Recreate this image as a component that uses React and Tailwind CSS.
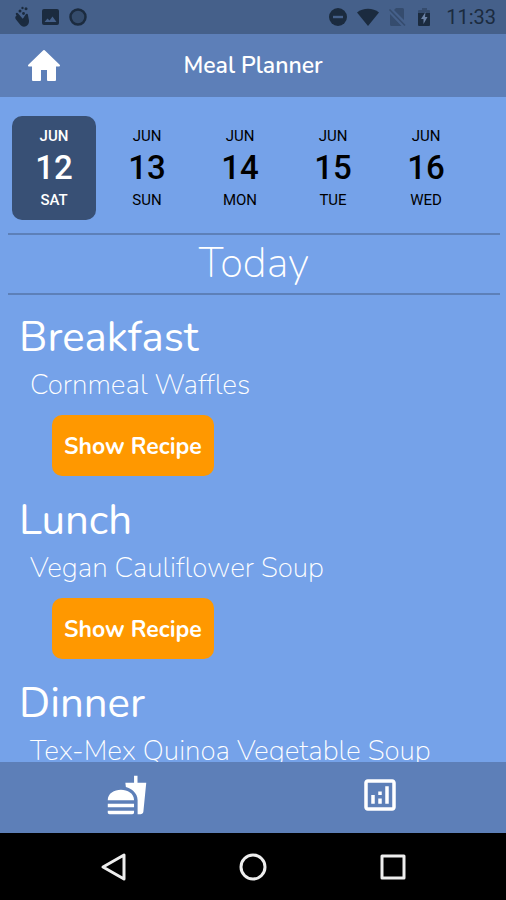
import { useState } from "react";
import { MdFastfood, MdOutlineAnalytics } from "react-icons/md";

const days = [
  { month: "JUN", date: 12, day: "SAT" },
  { month: "JUN", date: 13, day: "SUN" },
  { month: "JUN", date: 14, day: "MON" },
  { month: "JUN", date: 15, day: "TUE" },
  { month: "JUN", date: 16, day: "WED" },
];

const meals = [
  { name: "Breakfast", dish: "Cornmeal Waffles" },
  { name: "Lunch", dish: "Vegan Cauliflower Soup" },
  { name: "Dinner", dish: "Tex-Mex Quinoa Vegetable Soup" },
];

function StatusBar() {
  return (
    <div className="flex h-[34px] shrink-0 items-center justify-between bg-[#45608a] pr-[10px] pl-[14px] text-[#1b2b3f]">
      <div className="flex items-center gap-2">
        {/* Hand */}
        <svg width="18" height="22" viewBox="0 0 18 22" fill="currentColor">
          <path d="M2.500 9.500c.9-.8 1.900-.3 2.600.6L8 13c1-.2 1.500-1 2-2l1.800-2.800c.5-.9 2-.6 2.100.5l1.100 5.800c.3 2.500-1 4.800-3 5.800-2.500 1.200-4.600 0-6.200-2L2 13.500c-1-1.200-1.200-2.800.500-4z" />
          <path d="M3 8l6 7" stroke="currentColor" strokeWidth="2.500" strokeLinecap="round" />
          <circle cx="6" cy="5" r="1.500" />
          <circle cx="9.500" cy="7.500" r="1.400" />
          <circle cx="8.500" cy="2" r="1.200" />
          <circle cx="12" cy="2.800" r="1.500" />
        </svg>
        {/* Picture */}
        <svg width="20" height="20" viewBox="0 0 20 20">
          <rect x="2" y="2" width="17" height="16" rx="2" fill="currentColor" />
          <path d="M4.500 15l3-3.500 2 2 3-4 4 5.500z" fill="#45608a" />
        </svg>
        <svg width="20" height="20" viewBox="0 0 20 20">
          <circle cx="10" cy="10" r="7.500" fill="#344b6b" stroke="currentColor" strokeWidth="2.500" />
        </svg>
      </div>
      <div className="flex items-center gap-2">
        {/* Do not disturb */}
        <svg width="20" height="20" viewBox="0 0 20 20">
          <circle cx="10" cy="10" r="9" fill="currentColor" />
          <path d="M5 10h10" stroke="#45608a" strokeWidth="2.400" />
        </svg>
        <svg width="24" height="20" viewBox="0 0 24 20">
          <path d="M1 5.500C7 .5 17 .5 23 5.500L12 19z" fill="currentColor" />
        </svg>
        {/* No SIM */}
        <svg width="18" height="20" viewBox="0 0 18 20">
          <path d="M8 1h6.500A1.500 1.500 0 0 1 16 2.500V13L6 3zM2 7l11.500 12H3.500A1.500 1.500 0 0 1 2 17.500z" fill="#354c6e" />
          <path d="M1.500 2.500L17 18.500" stroke="#354c6e" strokeWidth="1.600" />
        </svg>
        {/* Battery */}
        <svg width="20" height="20" viewBox="0 0 20 20">
          <path d="M8 1h5v2h2a1 1 0 0 1 1 1v3H4V4a1 1 0 0 1 1-1h3z" fill="#354c6e" />
          <path d="M4 6h12v12a1 1 0 0 1-1 1H5a1 1 0 0 1-1-1z" fill="currentColor" />
          <path d="M11.500 5L7 12h2.500v5l4-7H11z" fill="#6b82a6" />
        </svg>
        <span className="pl-1 font-['Roboto',sans-serif] text-[20px] leading-6">11:33</span>
      </div>
    </div>
  );
}

function Header() {
  return (
    <header className="grid h-[63px] shrink-0 grid-cols-[1fr_auto_1fr] items-center bg-[#5d7fb8] px-6">
      <button type="button" aria-label="Home" className="w-10 justify-self-start text-white">
        <svg width="40" height="36" viewBox="0 0 40 36">
          <path
            d="M20 3L5 17.500h4V32h7V21h8v11h7V17.500h4z"
            fill="currentColor"
            stroke="currentColor"
            strokeWidth="2"
            strokeLinejoin="round"
          />
        </svg>
      </button>
      <h1 className="text-[23px] leading-8 font-semibold text-white">Meal Planner</h1>
    </header>
  );
}

function DayPicker({ selected, onSelect }) {
  return (
    <div className="flex gap-[9px] px-3 pt-[19px] pb-[13px] font-['Roboto',sans-serif]">
      {days.map((item) => (
        <button
          key={item.date}
          type="button"
          aria-pressed={selected === item.date}
          onClick={() => onSelect(item.date)}
          className={`flex h-[104px] w-[84px] flex-col items-center justify-center rounded-[10px] ${
            selected === item.date ? "bg-[#385075] font-medium text-white" : "font-normal text-black"
          }`}
        >
          <span className="text-[15px] leading-6">{item.month}</span>
          <span className="text-[33px] leading-10 font-medium">{item.date}</span>
          <span className="text-[15px] leading-6">{item.day}</span>
        </button>
      ))}
    </div>
  );
}

function Meal({ name, dish }) {
  return (
    <section className="flex h-[183px] shrink-0 flex-col items-start">
      <h3 className="pl-[19px] text-[42px] leading-[58px] font-normal">{name}</h3>
      <p className="pl-[30px] text-[28px] leading-9 font-extralight">{dish}</p>
      <button
        type="button"
        className="mt-3 ml-[52px] h-[61px] rounded-[10px] bg-[#ff9800] px-3 pt-1 text-[23px] font-bold"
      >
        Show Recipe
      </button>
    </section>
  );
}

export default function App() {
  const [selected, setSelected] = useState(12);

  return (
    <div className="flex h-screen flex-col bg-[#75a2e9] font-['Nunito','Lato',sans-serif]">
      <StatusBar />
      <Header />

      <main className="min-h-0 flex-1 overflow-hidden text-white">
        <DayPicker selected={selected} onSelect={setSelected} />
        <h2 className="mr-[6px] ml-2 h-[62px] border-y-2 border-[#5d80b8] text-center text-[42px] leading-[57px] font-extralight">
          Today
        </h2>
        <div className="flex flex-col pt-[14px]">
          {meals.map((meal) => (
            <Meal key={meal.name} name={meal.name} dish={meal.dish} />
          ))}
        </div>
      </main>

      {/* Tabs */}
      <nav className="grid h-[71px] shrink-0 grid-cols-2 bg-[#5d7fb8] text-white">
        <button type="button" aria-label="Meals" className="flex items-center justify-center pb-[6px]">
          <MdFastfood size={42} />
        </button>
        <button type="button" aria-label="Stats" className="flex items-center justify-center pb-[6px]">
          <MdOutlineAnalytics size={42} />
        </button>
      </nav>

      {/* System buttons */}
      <div className="flex h-[67px] shrink-0 items-center justify-center gap-[108px] bg-black text-[#eeeeee]">
        <button type="button" aria-label="Back">
          <svg width="32" height="32" viewBox="0 0 32 32" fill="none" stroke="currentColor" strokeWidth="3" strokeLinejoin="round">
            <path d="M27 4v24L6 16z" />
          </svg>
        </button>
        <button type="button" aria-label="Home screen">
          <svg width="32" height="32" viewBox="0 0 32 32" fill="none" stroke="currentColor" strokeWidth="3">
            <circle cx="16" cy="16" r="12" />
          </svg>
        </button>
        <button type="button" aria-label="Recent apps">
          <svg width="32" height="32" viewBox="0 0 32 32" fill="none" stroke="currentColor" strokeWidth="3" strokeLinejoin="round">
            <rect x="5" y="5" width="22" height="22" />
          </svg>
        </button>
      </div>
    </div>
  );
}
